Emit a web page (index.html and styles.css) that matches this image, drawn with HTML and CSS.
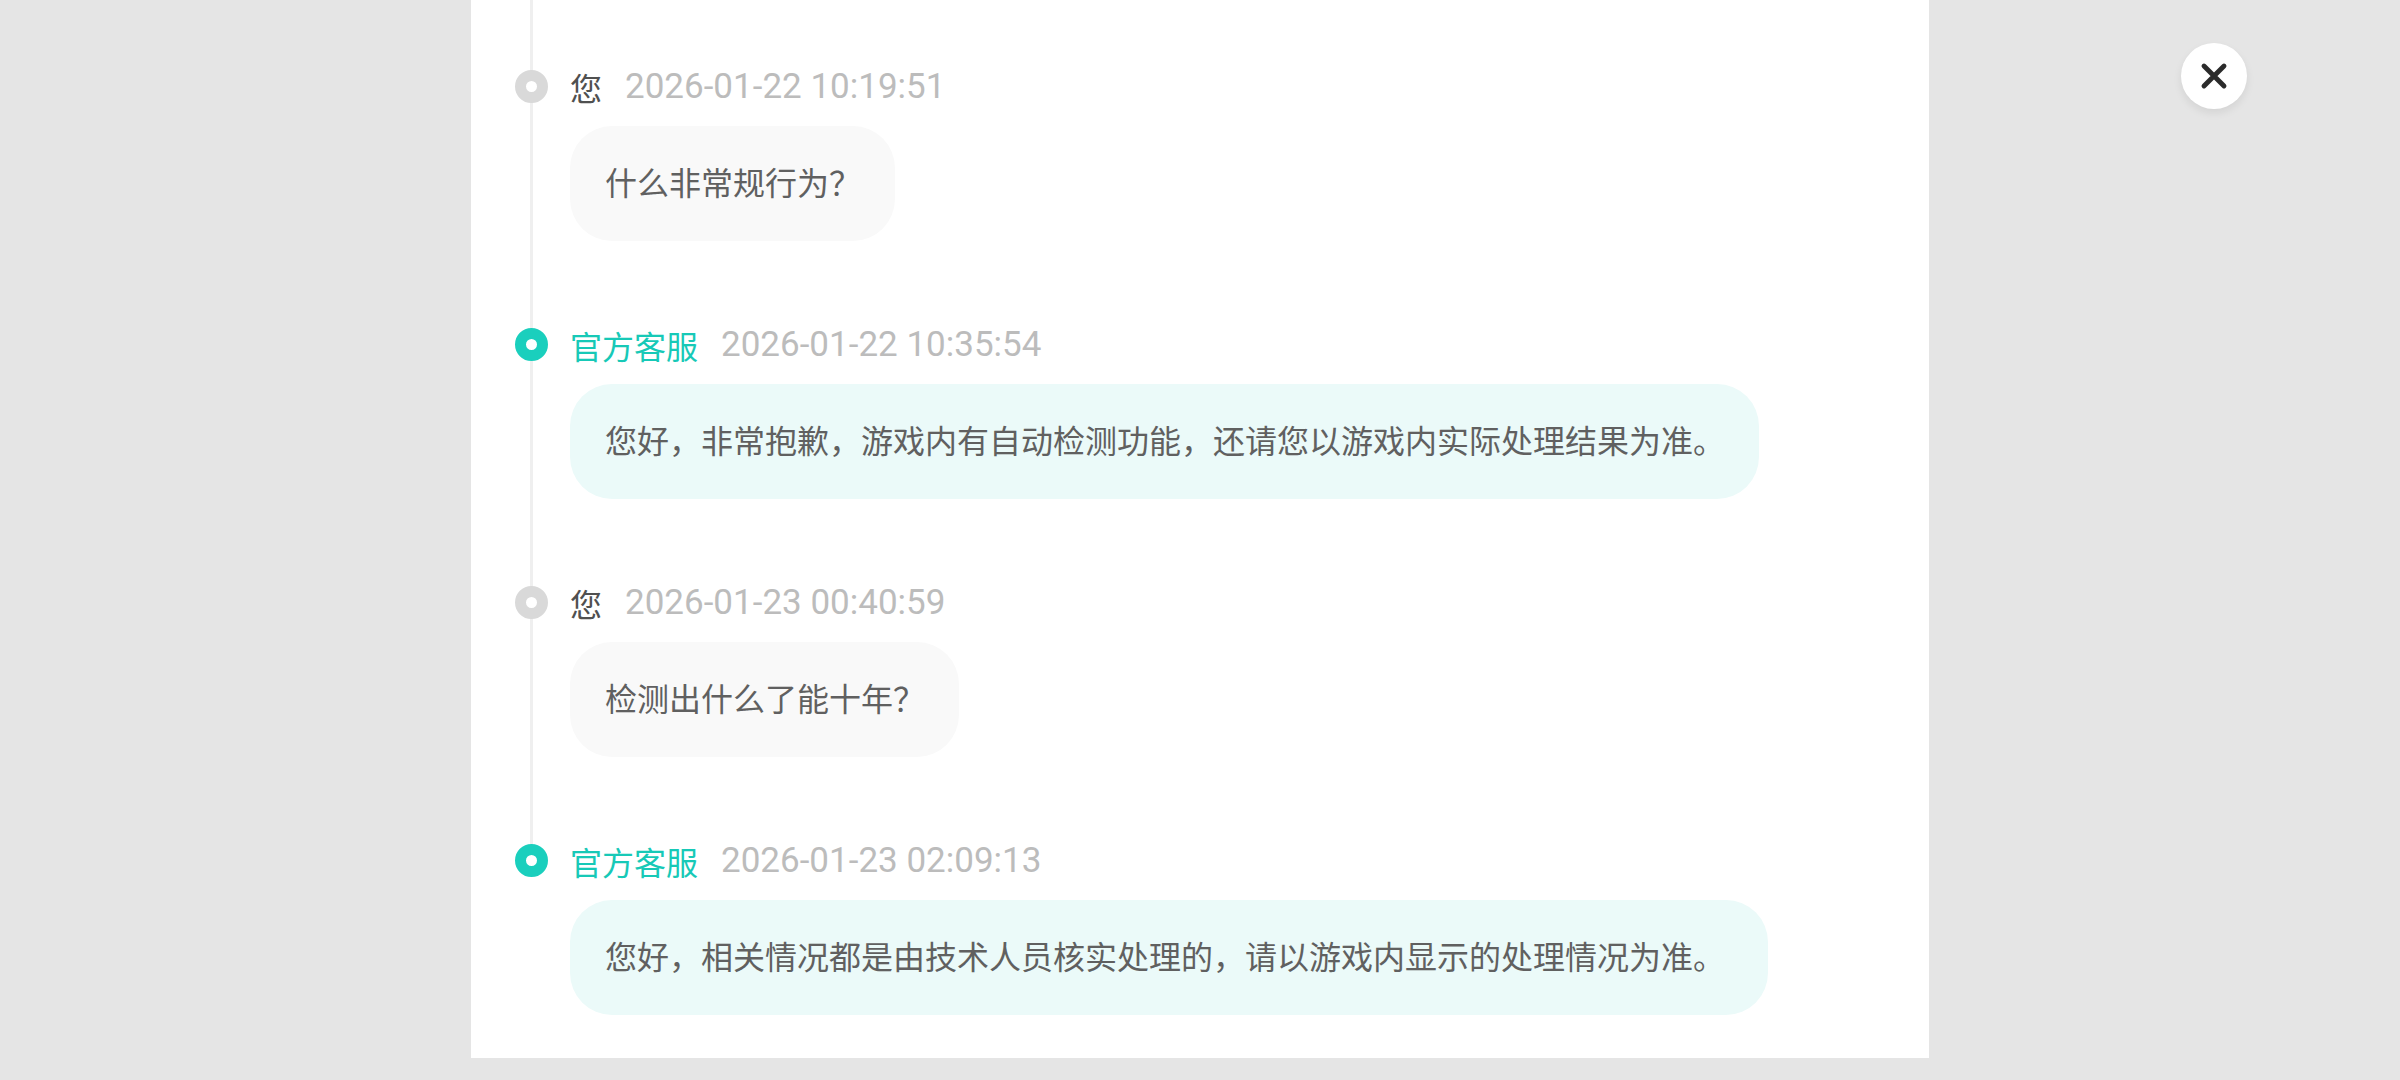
FILE: index.html
```html
<!DOCTYPE html>
<html lang="zh-CN">
<head>
<meta charset="utf-8">
<title>工单记录</title>
<link rel="stylesheet" href="styles.css">
</head>
<body>
<main class="panel">
  <ol class="timeline">
    <li class="item user">
      <div class="rail"><span class="dot"></span></div>
      <div class="body">
        <div class="meta"><span class="who">您</span><span class="time">2026-01-22 10:19:51</span></div>
        <div class="bubble">什么非常规行为？</div>
      </div>
    </li>
    <li class="item staff">
      <div class="rail"><span class="dot"></span></div>
      <div class="body">
        <div class="meta"><span class="who">官方客服</span><span class="time">2026-01-22 10:35:54</span></div>
        <div class="bubble">您好，非常抱歉，游戏内有自动检测功能，还请您以游戏内实际处理结果为准。</div>
      </div>
    </li>
    <li class="item user">
      <div class="rail"><span class="dot"></span></div>
      <div class="body">
        <div class="meta"><span class="who">您</span><span class="time">2026-01-23 00:40:59</span></div>
        <div class="bubble">检测出什么了能十年？</div>
      </div>
    </li>
    <li class="item staff">
      <div class="rail"><span class="dot"></span></div>
      <div class="body">
        <div class="meta"><span class="who">官方客服</span><span class="time">2026-01-23 02:09:13</span></div>
        <div class="bubble wide">您好，相关情况都是由技术人员核实处理的，请以游戏内显示的处理情况为准。</div>
      </div>
    </li>
  </ol>
</main>
<button class="close" type="button" aria-label="关闭">
  <svg viewBox="0 0 24 24" width="30" height="30"><path d="M4 4 L20 20 M20 4 L4 20" stroke="#2b2b2b" stroke-width="3.9" stroke-linecap="round" fill="none"/></svg>
</button>
</body>
</html>
```

FILE: styles.css
```css
* { box-sizing: border-box; }
html, body { margin: 0; padding: 0; }
body {
  background: #e5e5e5;
  font-family: "Noto Sans CJK SC", "Noto Sans", sans-serif;
  height: 1080px;
  overflow: hidden;
}
.panel {
  width: 1458px;
  margin: 0 auto;
  background: #ffffff;
  padding: 0 0 43.5px 0;
}
.timeline {
  list-style: none;
  margin: 0;
  padding: 64.5px 0 0 0;
  background: linear-gradient(#efefef, #efefef) no-repeat 59px 0 / 3px calc(100% - 154px);
}
.item {
  display: flex;
  align-items: flex-start;
  padding-left: 44px;
}
.item + .item { margin-top: 82px; }
.rail {
  width: 33px;
  height: 44px;
  display: flex;
  align-items: center;
  justify-content: center;
  flex: none;
}
.dot {
  width: 33px;
  height: 33px;
  border-radius: 50%;
  border: 11px solid #d9d9d9;
  background: #ffffff;
}
.staff .dot { border-color: #1acfbd; }
.body {
  margin-left: 22px;
  display: flex;
  flex-direction: column;
  align-items: flex-start;
  gap: 17px;
}
.meta {
  display: flex;
  align-items: center;
  gap: 23px;
  height: 44px;
  font-size: 32px;
  line-height: 44px;
}
.who { color: #505050; }
.staff .who { color: #17c9b7; }
.time {
  color: #bcbcbc;
  font-family: Roboto, "Noto Sans", sans-serif;
  font-size: 35px;
}
.bubble {
  font-size: 32px;
  line-height: 45px;
  color: #606060;
  padding: 33px 34px 37px 35px;
  border-radius: 42px;
  background: #f9f9f9;
  white-space: nowrap;
}
.bubble.wide { padding-right: 43px; }
.staff .bubble { background: #ebfaf9; }
.close {
  position: fixed;
  left: 2181px;
  top: 43px;
  width: 66px;
  height: 66px;
  border-radius: 50%;
  border: none;
  padding: 0;
  background: #ffffff;
  box-shadow: 0 4px 8px rgba(0, 0, 0, 0.08);
  display: flex;
  align-items: center;
  justify-content: center;
}
```
